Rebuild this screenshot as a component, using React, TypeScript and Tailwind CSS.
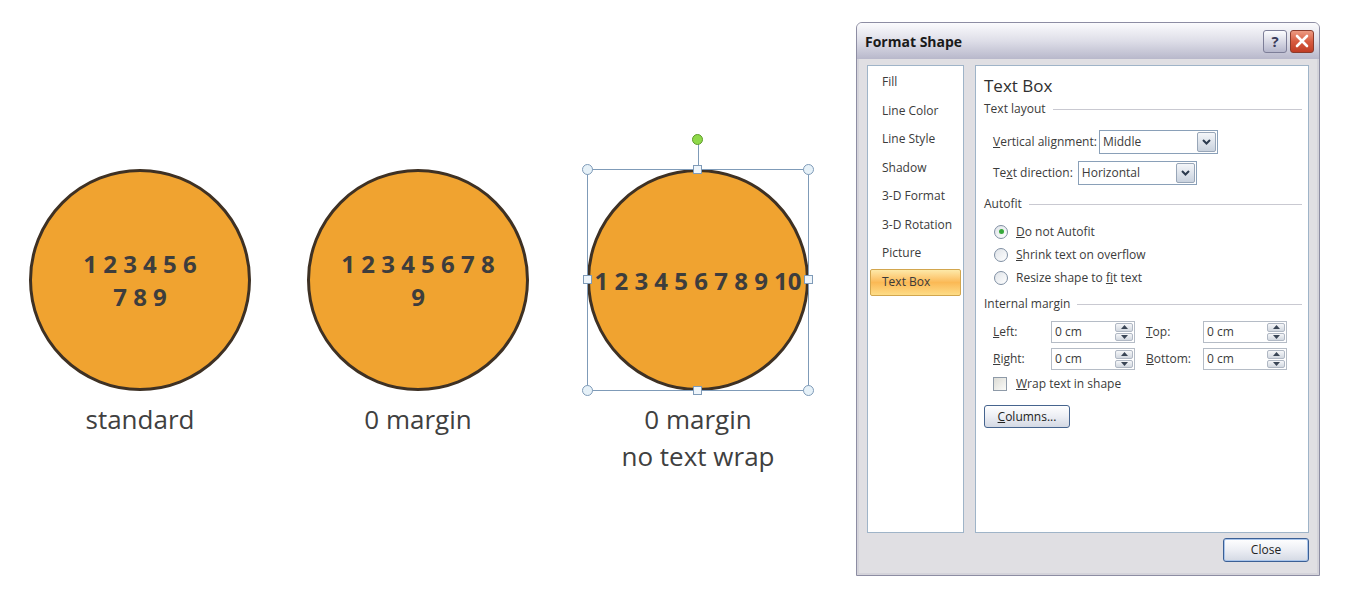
import React from 'react';

const NAV = ['Fill', 'Line Color', 'Line Style', 'Shadow', '3-D Format', '3-D Rotation', 'Picture', 'Text Box'];

function Shape({ lines, selected }: { lines: string[]; selected?: boolean }) {
  return (
    <div className="relative h-[222px] w-[222px]">
      <div className="flex h-full w-full flex-col items-center justify-center rounded-full border-[3px] border-[#3e3124] bg-[#f0a330] font-['Open_Sans',sans-serif] text-[24px] font-bold leading-[33px] text-[#3d3d3d]">
        {lines.map((l) => (
          <div key={l} className="whitespace-nowrap">
            {l}
          </div>
        ))}
      </div>
      {selected && (
        <>
          <div className="absolute inset-0 border border-[#7f9bb8]" />
          <div className="absolute left-1/2 -top-[30px] h-[30px] w-px bg-[#7f9bb8]" />
          <div className="absolute left-[105px] -top-[35px] h-[11px] w-[11px] rounded-full border border-[#5f9a2a] bg-[#8fd94a]" />
          <div className="absolute -left-[5px] -top-[5px] h-[11px] w-[11px] rounded-full border border-[#7f9bb8] bg-[#e6f1f8]" />
          <div className="absolute -right-[5px] -top-[5px] h-[11px] w-[11px] rounded-full border border-[#7f9bb8] bg-[#e6f1f8]" />
          <div className="absolute -left-[5px] -bottom-[5px] h-[11px] w-[11px] rounded-full border border-[#7f9bb8] bg-[#e6f1f8]" />
          <div className="absolute -right-[5px] -bottom-[5px] h-[11px] w-[11px] rounded-full border border-[#7f9bb8] bg-[#e6f1f8]" />
          <div className="absolute left-[106px] -top-[4px] h-[9px] w-[9px] border border-[#7f9bb8] bg-[#eef5fb]" />
          <div className="absolute left-[106px] -bottom-[4px] h-[9px] w-[9px] border border-[#7f9bb8] bg-[#eef5fb]" />
          <div className="absolute -left-[4px] top-[106px] h-[9px] w-[9px] border border-[#7f9bb8] bg-[#eef5fb]" />
          <div className="absolute -right-[4px] top-[106px] h-[9px] w-[9px] border border-[#7f9bb8] bg-[#eef5fb]" />
        </>
      )}
    </div>
  );
}

function Chevron() {
  return (
    <svg width="9" height="6" viewBox="0 0 9 6">
      <path d="M1 1 L4.5 4.5 L8 1" fill="none" stroke="#2b3a4e" strokeWidth="2" />
    </svg>
  );
}

function Select({ value, width }: { value: string; width: string }) {
  return (
    <div className={`flex h-[24px] items-center border border-[#8aa0b8] bg-white ${width}`}>
      <span className="flex-1 pl-[3px]">{value}</span>
      <div className="mr-px flex h-[20px] w-[19px] items-center justify-center rounded-[2px] border border-[#98a6b8] bg-linear-to-b from-[#f4f6f9] to-[#c9d2de]">
        <Chevron />
      </div>
    </div>
  );
}

function Spin() {
  return (
    <div className="flex h-[22px] w-[84px] border border-[#b5bcc6] bg-white">
      <span className="flex-1 pl-[3px] leading-[20px]">0 cm</span>
      <div className="flex w-[19px] flex-col gap-px py-px pr-px">
        <div className="flex flex-1 items-center justify-center rounded-[2px] border border-[#b0b8c4] bg-linear-to-b from-[#f6f7f9] to-[#d2d8e0]">
          <svg width="7" height="4" viewBox="0 0 7 4">
            <path d="M0 4 L3.5 0 L7 4 Z" fill="#3a4656" />
          </svg>
        </div>
        <div className="flex flex-1 items-center justify-center rounded-[2px] border border-[#b0b8c4] bg-linear-to-b from-[#f6f7f9] to-[#d2d8e0]">
          <svg width="7" height="4" viewBox="0 0 7 4">
            <path d="M0 0 L3.5 4 L7 0 Z" fill="#3a4656" />
          </svg>
        </div>
      </div>
    </div>
  );
}

function Radio({ checked, children }: { checked?: boolean; children: React.ReactNode }) {
  return (
    <div className="flex h-[23px] items-center pl-[10px]">
      <div className="flex h-[14px] w-[14px] items-center justify-center rounded-full border border-[#7f8fa3] bg-linear-to-br from-[#dfe3e8] to-white">
        {checked && <div className="h-[5px] w-[5px] rounded-full bg-[#36a83a]" />}
      </div>
      <span className="ml-[8px]">{children}</span>
    </div>
  );
}

function Section({ title }: { title: string }) {
  return (
    <div className="flex h-[24px] items-center pr-[6px]">
      <span>{title}</span>
      <div className="ml-[7px] h-px flex-1 bg-[#c9c9d1]" />
    </div>
  );
}

export default function App() {
  return (
    <div className="flex h-[607px] w-[1362px] items-start overflow-hidden bg-white">
      <div className="flex pl-[29px] pt-[169px] font-['Open_Sans',sans-serif] text-[26px] leading-[37px] text-[#404040]">
        <div className="flex w-[222px] flex-col items-center">
          <Shape lines={['1 2 3 4 5 6', '7 8 9']} />
          <div className="mt-[10px]">standard</div>
        </div>
        <div className="ml-[56px] flex w-[222px] flex-col items-center">
          <Shape lines={['1 2 3 4 5 6 7 8', '9']} />
          <div className="mt-[10px]">0 margin</div>
        </div>
        <div className="ml-[58px] flex w-[222px] flex-col items-center">
          <Shape lines={['1 2 3 4 5 6 7 8 9 10']} selected />
          <div className="mt-[10px] text-center">
            0 margin
            <br />
            no text wrap
          </div>
        </div>
      </div>

      <div className="ml-[47px] mt-[22px] flex h-[554px] w-[464px] flex-col rounded-t-[6px] border border-[#8d8da3] bg-[#e0dfe3] font-['Open_Sans',sans-serif] text-[12px] text-[#3b3b3b] shadow-[inset_0_0_0_2px_#d4d3da]">
        <div className="flex h-[36px] items-center rounded-t-[5px] bg-linear-to-b from-[#fbfbfd] via-[#dedee8] to-[#b8b8cb] pl-[8px] pr-[5px]">
          <span className="flex-1 text-[14px] font-bold text-[#1a1a1a]">Format Shape</span>
          <div className="flex h-[23px] w-[24px] items-center justify-center rounded-[3px] border border-[#7d7e98] bg-linear-to-b from-[#fdfdff] to-[#b6b7cc] text-[15px] font-bold text-[#3a3a5a]">
            ?
          </div>
          <div className="ml-[3px] flex h-[23px] w-[24px] items-center justify-center rounded-[3px] border border-[#8b3b2c] bg-linear-to-b from-[#ec9a82] via-[#d75b40] to-[#c03c24]">
            <svg width="14" height="14" viewBox="0 0 14 14">
              <path d="M2 2 L12 12 M12 2 L2 12" stroke="white" strokeWidth="2.6" strokeLinecap="round" />
            </svg>
          </div>
        </div>

        <div className="flex flex-1 flex-col px-[10px] pt-[6px]">
          <div className="flex h-[468px] gap-[11px]">
            <div className="flex w-[97px] flex-col border border-[#9fb4c8] bg-white px-[2px] pt-[2px]">
              {NAV.map((n) =>
                n === 'Text Box' ? (
                  <div
                    key={n}
                    className="mt-[1px] flex h-[27px] items-center rounded-[2px] border border-[#d2a64e] bg-linear-to-b from-[#fde9a8] via-[#fbb955] to-[#fddc86] pl-[11px] text-[#3a3a3a]"
                  >
                    {n}
                  </div>
                ) : (
                  <div key={n} className="flex h-[28.5px] items-center pl-[12px]">
                    {n}
                  </div>
                ),
              )}
            </div>

            <div className="flex flex-1 flex-col border border-[#9fb4c8] bg-white pl-[8px] pt-[9px]">
              <div className="h-[22px] text-[17px] leading-[22px] text-[#2f2f2f]">Text Box</div>
              <Section title="Text layout" />
              <div className="mt-[9px] flex h-[24px] items-center gap-[2px] pl-[9px]">
                <span>
                  <u>V</u>ertical alignment:
                </span>
                <Select value="Middle" width="w-[119px]" />
              </div>
              <div className="mt-[7px] flex h-[24px] items-center gap-[5px] pl-[9px]">
                <span>
                  Te<u>x</u>t direction:
                </span>
                <Select value="Horizontal" width="w-[119px]" />
              </div>
              <div className="mt-[7px]">
                <Section title="Autofit" />
              </div>
              <div className="mt-[4px]">
                <Radio checked>
                  <u>D</u>o not Autofit
                </Radio>
                <Radio>
                  <u>S</u>hrink text on overflow
                </Radio>
                <Radio>
                  Resize shape to <u>f</u>it text
                </Radio>
              </div>
              <div className="mt-[3px]">
                <Section title="Internal margin" />
              </div>
              <div className="mt-[5px] flex h-[22px] items-center pl-[9px]">
                <span className="w-[58px]">
                  <u>L</u>eft:
                </span>
                <Spin />
                <span className="ml-[11px] w-[57px]">
                  <u>T</u>op:
                </span>
                <Spin />
              </div>
              <div className="mt-[5px] flex h-[22px] items-center pl-[9px]">
                <span className="w-[58px]">
                  <u>R</u>ight:
                </span>
                <Spin />
                <span className="ml-[11px] w-[57px]">
                  <u>B</u>ottom:
                </span>
                <Spin />
              </div>
              <div className="mt-[4px] flex h-[20px] items-center pl-[9px]">
                <div className="h-[14px] w-[14px] border border-[#8e9aa8] bg-linear-to-br from-[#dcdcd6] to-[#fbfbf8]" />
                <span className="ml-[9px]">
                  <u>W</u>rap text in shape
                </span>
              </div>
              <div className="mt-[11px] flex h-[23px] w-[86px] items-center justify-center rounded-[3px] border border-[#46648e] bg-linear-to-b from-[#ffffff] via-[#eceef4] to-[#d4d9e4] text-[#222]">
                <span>
                  <u>C</u>olumns...
                </span>
              </div>
            </div>
          </div>
          <div className="flex justify-end pt-[5px]">
            <div className="flex h-[24px] w-[86px] items-center justify-center rounded-[3px] border border-[#3b5f95] bg-linear-to-b from-[#ffffff] via-[#eceef4] to-[#d4d9e4] text-[#222] shadow-[inset_0_0_0_1px_#a9c4ea]">
              Close
            </div>
          </div>
        </div>
      </div>
    </div>
  );
}
